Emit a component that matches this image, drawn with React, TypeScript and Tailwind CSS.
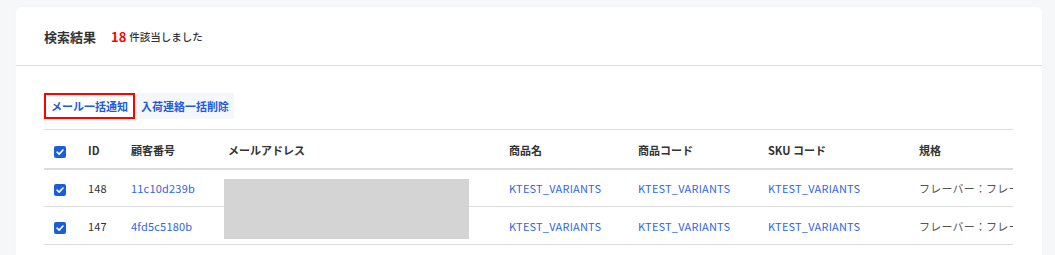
const font = { fontFamily: '"Noto Sans CJK JP", "Noto Sans", sans-serif' };

type Row = { id: string; customer: string };

const rows: Row[] = [
  { id: "148", customer: "11c10d239b" },
  { id: "147", customer: "4fd5c5180b" },
];

function Check() {
  return (
    <span className="inline-flex h-[12px] w-[12px] items-center justify-center rounded-[2px] bg-[#1a5fd8] align-middle">
      <svg viewBox="0 0 12 12" className="h-[10px] w-[10px]" fill="none">
        <path d="M2.5 6.2 5 8.5 9.6 3.6" stroke="#fff" strokeWidth="1.9" strokeLinecap="round" strokeLinejoin="round" />
      </svg>
    </span>
  );
}

export default function App() {
  const th = "h-[39px] pl-[10px] pt-[2px] text-left align-middle text-[11px] font-bold text-[#333]";
  const base = "h-[38px] pl-[10px] pt-[1px] align-middle text-[11px] whitespace-nowrap tracking-[0.2px]";
  const td = `${base} text-[#333]`;
  const tdLink = `${base} text-[#2f66e0]`;
  const tdSpec = `${base} text-[#555]`;

  return (
    <div className="min-h-[255px] bg-[#f5f7f9] pl-[16px] pr-[13px] pt-[7px]" style={font}>
      <div className="h-[248px] overflow-hidden rounded-t-[5px] bg-white shadow-[0_0_2px_rgba(0,0,0,0.04)]">
        <div className="flex h-[59px] items-center border-b border-[#dcdcdc] pl-[28px] pt-[2px]">
          <span className="text-[13px] font-bold text-[#333]">検索結果</span>
          <span className="ml-[15px] text-[13px] font-bold text-[#f00]">18</span>
          <span className="ml-[3px] text-[10.5px] font-medium text-[#333]">件該当しました</span>
        </div>

        <div className="pl-[28px] pr-[29px] pt-[27px]">
          <div className="flex h-[26px]">
            <button className="h-[26px] border-2 border-[#f00] px-[5px] text-[11px] font-bold text-[#1f5bd8]">
              メール一括通知
            </button>
            <button className="ml-[1px] h-[26px] bg-[#f5f7fa] px-[5px] text-[11px] font-bold text-[#1f5bd8]">
              入荷連絡一括削除
            </button>
          </div>

          <div className="relative mt-[10px] overflow-hidden">
            <table className="w-[1100px] table-fixed border-collapse">
              <colgroup>
                <col className="w-[34px]" />
                <col className="w-[43px]" />
                <col className="w-[97px]" />
                <col className="w-[281px]" />
                <col className="w-[129px]" />
                <col className="w-[130px]" />
                <col className="w-[151px]" />
                <col />
              </colgroup>
              <thead>
                <tr className="border-t border-b-2 border-t-[#dcdcdc] border-b-[#dcdcdc]">
                  <th className={th}><Check /></th>
                  <th className={th}>ID</th>
                  <th className={th}>顧客番号</th>
                  <th className={th}>メールアドレス</th>
                  <th className={th}>商品名</th>
                  <th className={th}>商品コード</th>
                  <th className={th}>SKU コード</th>
                  <th className={th}>規格</th>
                </tr>
              </thead>
              <tbody>
                {rows.map((r) => (
                  <tr key={r.id} className="border-b border-[#dcdcdc]">
                    <td className={td}><Check /></td>
                    <td className={td}>{r.id}</td>
                    <td className={tdLink}>{r.customer}</td>
                    <td className={td}></td>
                    <td className={tdLink}>KTEST_VARIANTS</td>
                    <td className={tdLink}>KTEST_VARIANTS</td>
                    <td className={tdLink}>KTEST_VARIANTS</td>
                    <td className={tdSpec}>フレーバー：フレーバーA</td>
                  </tr>
                ))}
              </tbody>
            </table>
            {/* masked email */}
            <div className="absolute left-[180px] top-[50px] h-[60px] w-[245px] bg-[#d4d4d4]" />
          </div>
        </div>
      </div>
    </div>
  );
}
